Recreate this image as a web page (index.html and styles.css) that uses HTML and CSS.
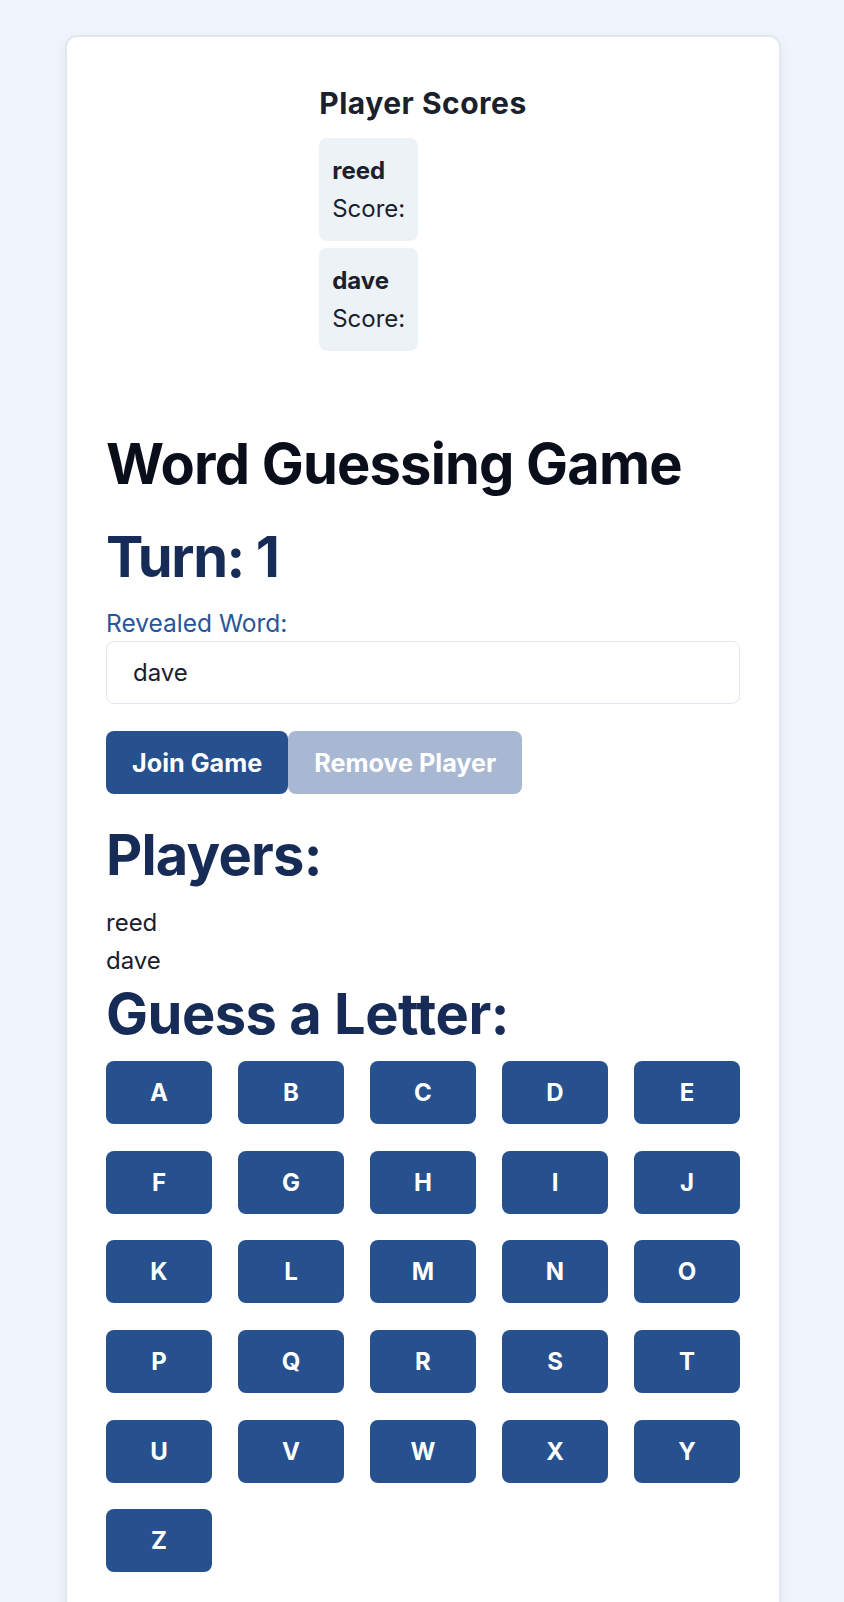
FILE: index.html
```html
<!DOCTYPE html>
<html lang="en">
<head>
<meta charset="utf-8">
<title>Word Guessing Game</title>
<link rel="stylesheet" href="styles.css">
</head>
<body>
<main class="card">
  <section class="scores">
    <div class="scores-inner">
      <h2 class="scores-title">Player Scores</h2>
      <ul class="score-list">
        <li class="score-item"><div class="score-name">reed</div><div class="score-value">Score:</div></li>
        <li class="score-item"><div class="score-name">dave</div><div class="score-value">Score:</div></li>
      </ul>
    </div>
  </section>

  <h1 class="title">Word Guessing Game</h1>
  <h2 class="turn">Turn: 1</h2>
  <label class="word-label" for="word">Revealed Word:</label>
  <input class="word-input" id="word" type="text" value="dave">

  <div class="actions">
    <button class="btn btn-primary">Join Game</button>
    <button class="btn btn-disabled">Remove Player</button>
  </div>

  <h2 class="section-title">Players:</h2>
  <ul class="player-list">
    <li>reed</li>
    <li>dave</li>
  </ul>

  <h2 class="section-title guess-title">Guess a Letter:</h2>
  <div class="letters">
    <button class="letter">A</button><button class="letter">B</button><button class="letter">C</button><button class="letter">D</button><button class="letter">E</button>
    <button class="letter">F</button><button class="letter">G</button><button class="letter">H</button><button class="letter">I</button><button class="letter">J</button>
    <button class="letter">K</button><button class="letter">L</button><button class="letter">M</button><button class="letter">N</button><button class="letter">O</button>
    <button class="letter">P</button><button class="letter">Q</button><button class="letter">R</button><button class="letter">S</button><button class="letter">T</button>
    <button class="letter">U</button><button class="letter">V</button><button class="letter">W</button><button class="letter">X</button><button class="letter">Y</button>
    <button class="letter">Z</button>
  </div>
</main>
</body>
</html>
```
FILE: styles.css
```css
* { box-sizing: border-box; }

html, body { margin: 0; }

body {
  background: #f0f4fc;
  font-family: Inter, "Noto Sans", "Liberation Sans", sans-serif;
  color: #1a202c;
  padding: 35px 63px 0 65px;
  font-size: 24px;
}

.card {
  background: #ffffff;
  border: 2px solid #e2e8f0;
  border-radius: 12px;
  box-shadow: 0 4px 14px rgba(30, 41, 80, 0.06);
  padding: 49px 39px 40px;
}

.scores {
  display: flex;
  justify-content: center;
}

.scores-inner {
  display: flex;
  flex-direction: column;
  align-items: flex-start;
}

.scores-title {
  margin: 0 0 18px;
  font-size: 30px;
  line-height: 34px;
  font-weight: 700;
  color: #1a202c;
  letter-spacing: 0.5px;
}

.score-list {
  list-style: none;
  margin: 0;
  padding: 0;
  display: flex;
  flex-direction: column;
  align-items: flex-start;
  gap: 7px;
}

.score-item {
  background: #edf2f7;
  border-radius: 8px;
  padding: 14px 13px 13px;
  line-height: 38px;
}

.score-name { font-weight: 700; }

.title {
  margin: 80px 0 0;
  font-size: 56px;
  line-height: 67px;
  font-weight: 700;
  color: #0a0e1a;
  letter-spacing: -0.8px;
}

.turn {
  margin: 26px 0 0;
  font-size: 56px;
  line-height: 67px;
  font-weight: 700;
  color: #162b55;
  letter-spacing: -1.4px;
}

.word-label {
  display: block;
  margin-top: 14px;
  font-size: 24.5px;
  line-height: 36px;
  color: #2a5596;
}

.word-input {
  display: block;
  width: 100%;
  height: 63px;
  border: 1px solid #e2e8f0;
  border-radius: 8px;
  padding: 0 26px;
  font: inherit;
  color: #1a202c;
  background: #fff;
  outline: none;
}

.actions {
  display: flex;
  margin-top: 27px;
}

.btn {
  height: 63px;
  padding: 0 26px;
  border: none;
  border-radius: 8px;
  font-family: inherit;
  font-size: 25.2px;
  font-weight: 700;
  color: #ffffff;
}

.btn-primary { background: #26508e; }
.btn-disabled { background: #a8b8d3; }

.section-title {
  margin: 28px 0 0;
  font-size: 56px;
  line-height: 67px;
  font-weight: 700;
  color: #162b55;
  letter-spacing: -0.8px;
}

.player-list {
  list-style: none;
  margin: 15px 0 0;
  padding: 0;
  line-height: 38px;
}

.guess-title {
  margin-top: 1px;
  letter-spacing: -0.5px;
}

.letters {
  margin-top: 13px;
  display: grid;
  grid-template-columns: repeat(5, 1fr);
  column-gap: 26px;
  row-gap: 26.7px;
}

.letter {
  height: 63px;
  border: none;
  border-radius: 8px;
  background: #26508e;
  color: #ffffff;
  font-family: inherit;
  font-size: 24px;
  font-weight: 700;
}
```
